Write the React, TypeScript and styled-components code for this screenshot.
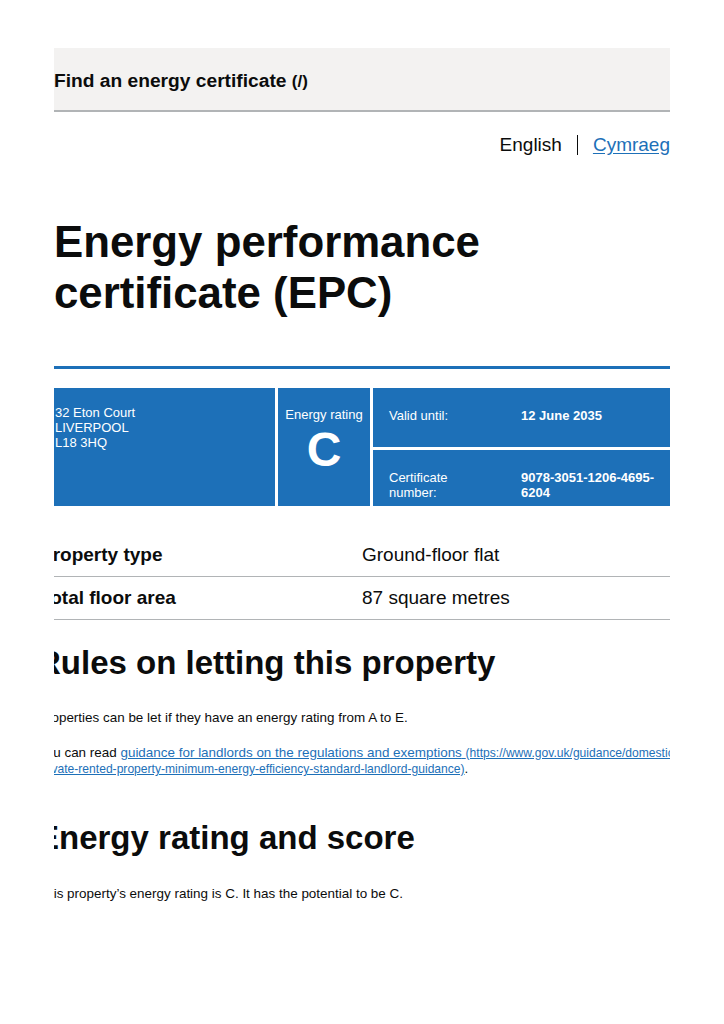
import styled, { createGlobalStyle } from "styled-components";

const GlobalStyle = createGlobalStyle`
  html, body {
    margin: 0;
    padding: 0;
    background: #ffffff;
  }
  body {
    font-family: "Liberation Sans", Arial, Helvetica, sans-serif;
    color: #0b0c0c;
  }
  * {
    box-sizing: border-box;
  }
`;

const Page = styled.div`
  width: 724px;
  padding: 48px 54px 80px 54px;
`;

const Sheet = styled.div`
  width: 616px;
  overflow: hidden;
`;

const Header = styled.header`
  height: 64px;
  display: flex;
  align-items: center;
  padding-top: 3px;
  background: #f3f2f1;
  border-bottom: 2px solid #b1b4b6;
`;

const ServiceName = styled.a`
  font-size: 19.2px;
  font-weight: 700;
  color: #0b0c0c;
  text-decoration: none;
`;

const PrintHref = styled.span`
  font-size: 17px;
  font-weight: 700;
`;

const LangBar = styled.div`
  display: flex;
  justify-content: flex-end;
  align-items: center;
  margin-top: 22px;
  font-size: 19px;
  line-height: 22px;
`;

const LangDivider = styled.span`
  width: 1px;
  height: 20px;
  margin: 0 15px;
  background: #0b0c0c;
`;

const LangLink = styled.a`
  color: #1d70b8;
  text-decoration: underline;
  text-underline-offset: 2px;
`;

const Title = styled.h1`
  margin: 60px 0 48px;
  font-size: 43.8px;
  line-height: 51px;
  font-weight: 700;
`;

const Rule = styled.div`
  height: 3px;
  background: #1d70b8;
  margin-bottom: 19px;
`;

const Summary = styled.div`
  display: grid;
  grid-template-columns: 221px 92px 1fr;
  grid-template-rows: 59px 56px;
  gap: 3px;
  color: #ffffff;
  font-size: 13px;
  line-height: 15px;
`;

const Address = styled.div`
  grid-row: span 2;
  background: #1d70b8;
  padding: 17px 1px;
`;

const Rating = styled.div`
  grid-row: span 2;
  background: #1d70b8;
  padding-top: 19px;
  text-align: center;
`;

const RatingLetter = styled.div`
  margin-top: 4px;
  font-size: 48px;
  line-height: 48px;
  font-weight: 700;
`;

const DetailRow = styled.div<{ $col: number; $row: number }>`
  grid-column: ${(p) => p.$col};
  grid-row: ${(p) => p.$row};
  display: grid;
  grid-template-columns: 100px 1fr;
  column-gap: 32px;
  align-content: start;
  padding: 20px 8px 0 16px;
  background: #1d70b8;
`;

const DetailValue = styled.div`
  font-weight: 700;
`;

const Content = styled.div`
  margin-left: -16px;
  width: 660px;
`;

const FactList = styled.dl`
  margin: 28px 0 0 2px;
  width: 646px;
`;

const FactRow = styled.div`
  display: grid;
  grid-template-columns: 322px 1fr;
  padding: 10px 0;
  border-bottom: 1px solid #b1b4b6;
  font-size: 19px;
  line-height: 22px;
`;

const FactKey = styled.dt`
  font-weight: 700;
`;

const FactValue = styled.dd`
  margin: 0;
`;

const SectionHeading = styled.h2<{ $top: number }>`
  margin: ${(p) => p.$top}px 0 0 -1px;
  font-size: 33px;
  line-height: 38px;
  font-weight: 700;
`;

const Para = styled.p<{ $top: number }>`
  margin: ${(p) => p.$top}px 0 0 0;
  font-size: 13.45px;
  line-height: 15px;
`;

const TextLink = styled.a`
  color: #1d70b8;
  text-decoration: underline;
`;

const LinkHref = styled.span`
  font-size: 90%;
`;

const facts = [
  { key: "Property type", value: "Ground-floor flat" },
  { key: "Total floor area", value: "87 square metres" },
];

export default function App() {
  return (
    <Page>
      <GlobalStyle />
      <Sheet>
        <Header>
          <ServiceName href="/">
            Find an energy certificate <PrintHref>(/)</PrintHref>
          </ServiceName>
        </Header>

        <LangBar>
          <span>English</span>
          <LangDivider />
          <LangLink href="#">Cymraeg</LangLink>
        </LangBar>

        <Title>
          Energy performance
          <br />
          certificate (EPC)
        </Title>

        <Rule />

        <Summary>
          <Address>
            32 Eton Court
            <br />
            LIVERPOOL
            <br />
            L18 3HQ
          </Address>
          <Rating>
            Energy rating
            <RatingLetter>C</RatingLetter>
          </Rating>
          <DetailRow $col={3} $row={1}>
            <div>Valid until:</div>
            <DetailValue>12 June 2035</DetailValue>
          </DetailRow>
          <DetailRow $col={3} $row={2}>
            <div>Certificate number:</div>
            <DetailValue>9078-3051-1206-4695-6204</DetailValue>
          </DetailRow>
        </Summary>

        <Content>
          <FactList>
            {facts.map((f) => (
              <FactRow key={f.key}>
                <FactKey>{f.key}</FactKey>
                <FactValue>{f.value}</FactValue>
              </FactRow>
            ))}
          </FactList>

          <SectionHeading $top={24}>Rules on letting this property</SectionHeading>
          <Para $top={28}>
            Properties can be let if they have an energy rating from A to E.
          </Para>
          <Para $top={20}>
            You can read{" "}
            <TextLink href="#">
              guidance for landlords on the regulations and exemptions{" "}
              <LinkHref>
                (https://www.gov.uk/guidance/domestic-private-rented-property-minimum-energy-efficiency-standard-landlord-guidance)
              </LinkHref>
            </TextLink>
            .
          </Para>

          <SectionHeading $top={42}>Energy rating and score</SectionHeading>
          <Para $top={29}>
            This property’s energy rating is C. It has the potential to be C.
          </Para>
        </Content>
      </Sheet>
    </Page>
  );
}
